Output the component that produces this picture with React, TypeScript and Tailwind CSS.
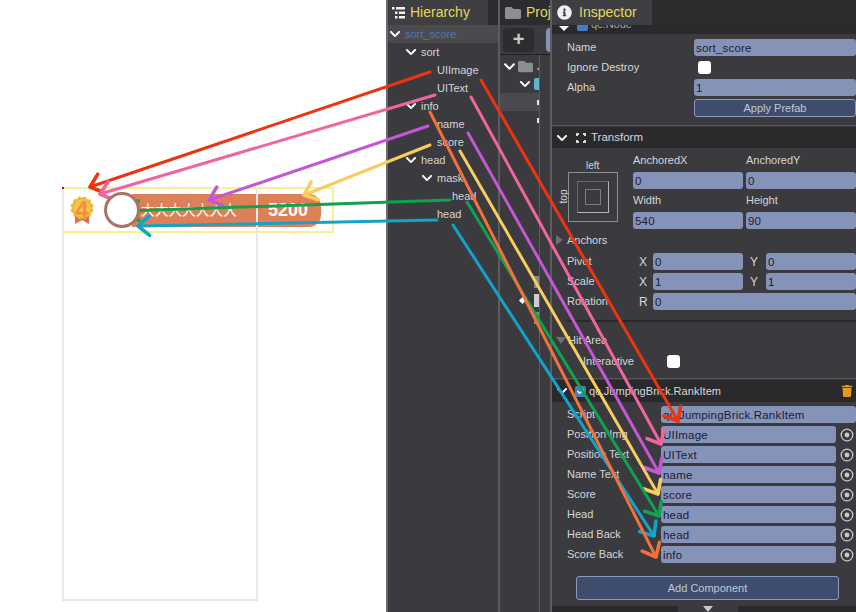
import { FaChevronDown, FaInfoCircle, FaFolder, FaTrash, FaCheck } from 'react-icons/fa'

const inputCls = 'bg-[#8693b8] rounded-[3px] h-[17px] px-[2px] text-[11.5px] leading-[18px] tracking-[0.2px] text-[#1c2030] overflow-hidden whitespace-nowrap'
const labelCls = 'text-[11px] text-[#d6d6d6]'

function Chevron({ size = 12 }: { size?: number }) {
  return <FaChevronDown size={size} className="text-white shrink-0" />
}

function TreeRow({ indent, label, open, active }: { indent: number; label: string; open?: boolean; active?: boolean }) {
  return (
    <div className={`h-[18px] flex items-center text-[11px] text-[#d4d4d4] whitespace-nowrap ${active ? 'bg-[#4b4b4f]' : ''}`} style={{ paddingLeft: indent }}>
      <div className="w-[16px] flex">{open && <Chevron />}</div>
      <span className={active ? 'text-[#4f74b5]' : ''}>{label}</span>
    </div>
  )
}

function Row({ label, value }: { label: string; value: string }) {
  return (
    <div className="flex items-center h-[17px] mt-[3px]">
      <div className={`w-[94px] ${labelCls}`}>{label}</div>
      <div className={`${inputCls} w-[175px]`}>{value}</div>
      <svg width="14" height="14" viewBox="0 0 14 14" className="ml-[4px] shrink-0">
        <circle cx="7" cy="7" r="5.8" fill="none" stroke="#c9c9c9" strokeWidth="1.3" />
        <circle cx="7" cy="7" r="2.4" fill="#c9c9c9" />
      </svg>
    </div>
  )
}

function Xy({ label, a, b, c, d, mt }: { label: string; a: string; b: string; c: string; d: string; mt: string }) {
  return (
    <div className={`flex items-center h-[17px] ${mt}`}>
      <div className={`w-[72px] ${labelCls}`}>{label}</div>
      <div className="w-[14px] text-[12px] text-[#d6d6d6]">{a}</div>
      <div className={`${inputCls} w-[90px]`}>{b}</div>
      <div className="w-[23px] pl-[7px] text-[12px] text-[#d6d6d6]">{c}</div>
      <div className={`${inputCls} w-[90px]`}>{d}</div>
    </div>
  )
}

function Arrows() {
  const lines: [string, number, number, number, number][] = [
    ['#f0330f', 430, 72, 90, 187],
    ['#f0330f', 481, 80, 678, 421],
    ['#f0659f', 435, 95, 100, 194],
    ['#f0659f', 471, 97, 661, 444],
    ['#c657d4', 428, 126, 209, 200],
    ['#c657d4', 468, 133, 659, 473],
    ['#f8cd5e', 430, 145, 304, 195],
    ['#f8cd5e', 460, 151, 658, 494],
    ['#0fa24f', 450, 200, 127, 211],
    ['#0fa24f', 467, 202, 659, 516],
    ['#12a3c9', 437, 220, 138, 226],
    ['#12a3c9', 453, 225, 654, 536],
    ['#f2703a', 430, 112, 656, 557],
  ]
  return (
    <svg width="856" height="612" className="absolute left-0 top-0 pointer-events-none">
      {lines.map(([color, x1, y1, x2, y2], i) => {
        const ang = Math.atan2(y2 - y1, x2 - x1)
        const h = 15
        const ax = x2 - h * Math.cos(ang - 0.7)
        const ay = y2 - h * Math.sin(ang - 0.7)
        const bx = x2 - h * Math.cos(ang + 0.7)
        const by = y2 - h * Math.sin(ang + 0.7)
        return (
          <g key={i} stroke={color} strokeWidth="3" fill="none" strokeLinecap="round" strokeLinejoin="round">
            <line x1={x1} y1={y1} x2={x2} y2={y2} />
            <polyline points={`${ax},${ay} ${x2},${y2} ${bx},${by}`} strokeWidth="3.6" />
          </g>
        )
      })}
    </svg>
  )
}

function Medal() {
  const pts = Array.from({ length: 24 }, (_, i) => {
    const r = i % 2 ? 12 : 10.2
    const a = (i * Math.PI) / 12
    return `${12 + r * Math.cos(a)},${12 + r * Math.sin(a)}`
  }).join(' ')
  return (
    <svg width="24" height="28" viewBox="0 0 24 28" className="shrink-0">
      <path d="M5 16 L5 28 L12 24 L19 28 L19 16 Z" fill="#e2685a" />
      <polygon points={pts} fill="#f4b533" />
      <circle cx="12" cy="12" r="8.5" fill="#f6c350" />
      <text x="12" y="22" textAnchor="middle" fontSize="24" fontWeight="700" fontFamily="Liberation Sans" fill="#e8953c">4</text>
    </svg>
  )
}

export default function App() {
  return (
    <div className="relative flex w-[856px] h-[612px] overflow-hidden bg-white font-['Liberation_Sans',sans-serif]">
      {/* game preview */}
      <div className="w-[386px] shrink-0 pl-[62px] pt-[187px]">
        <div className="relative w-[196px] h-[414px]">
          <div className="w-[272px] h-[46px] border-2 border-[#f6f294] flex items-center pl-[6px]">
            <Medal />
            <div className="ml-[10px] w-[36px] h-[36px] rounded-full bg-white border-[3px] border-[#ab7462] z-10 shrink-0" />
            <div className="-ml-[8px] w-[189px] h-[33px] rounded-r-[12px] bg-[#de8057] flex items-center pl-[9px] text-white">
              <span className="w-[127px] text-[13.7px] font-['Noto_Sans_CJK_SC',sans-serif] leading-none whitespace-nowrap">大大大大大大大</span>
              <span className="text-[18px] font-bold">5200</span>
            </div>
          </div>
          <div className="absolute inset-0 border-2 border-[#e8e8e8] border-t-0" />
          <div className="absolute left-0 top-0 w-[2px] h-[2px] bg-[#a01030]" />
        </div>
      </div>

      {/* hierarchy */}
      <div className="w-[114px] shrink-0 bg-[#3b3b3f] border-l-2 border-[#6a6a6c] border-r-2 border-r-[#5c5c5f]">
        <div className="h-[25px] bg-[#2c2c2f]">
          <div className="w-[100px] h-[25px] bg-[#3f3f43] flex items-center gap-[5px] pl-[4px]">
            <svg width="13" height="13" viewBox="0 0 13 13" fill="#f2f2f2">
              <rect x="0" y="1" width="2.5" height="2.5" />
              <rect x="4" y="1" width="9" height="2.5" />
              <rect x="3" y="5.5" width="2.5" height="2.5" />
              <rect x="7" y="5.5" width="6" height="2.5" />
              <rect x="3" y="10" width="2.5" height="2.5" />
              <rect x="7" y="10" width="6" height="2.5" />
            </svg>
            <span className="text-[14px] text-[#e6d65a]">Hierarchy</span>
          </div>
        </div>
        <TreeRow indent={1} label="sort_score" open active />
        <TreeRow indent={17} label="sort" open />
        <TreeRow indent={33} label="UIImage" />
        <TreeRow indent={33} label="UIText" />
        <TreeRow indent={17} label="info" open />
        <TreeRow indent={33} label="name" />
        <TreeRow indent={33} label="score" />
        <TreeRow indent={17} label="head" open />
        <TreeRow indent={33} label="mask" open />
        <TreeRow indent={48} label="head" />
        <TreeRow indent={33} label="head" />
      </div>

      {/* project */}
      <div className="w-[52px] shrink-0 bg-[#3b3b3f] border-r-2 border-[#5c5c5f]">
        <div className="h-[25px] bg-[#2c2c2f] flex items-center gap-[5px] pl-[5px] overflow-hidden">
          <FaFolder size={16} className="text-[#8b8f92] shrink-0" />
          <span className="text-[14px] text-[#e6d65a]">Proj</span>
        </div>
        <div className="h-[30px] flex items-center pl-[3px] gap-[12px] border-b border-[#222225] overflow-hidden">
          <div className="w-[31px] h-[24px] shrink-0 rounded-[4px] bg-[#2d2d30] text-center text-[20px] leading-[22px] font-bold text-[#c9c9c9]">+</div>
          <div className="w-[8px] h-[24px] shrink-0 rounded-l-[4px] bg-[#8693b8]" />
        </div>
        <div className="w-[40px] h-[557px] border-r border-[#5c5c5f] overflow-hidden">
          <div className="h-[18px] mt-[2px] flex items-center pl-[3px] gap-[2px]">
            <Chevron size={13} />
            <FaFolder size={15} className="text-[#8b8f92] shrink-0" />
            <span className="ml-[2px] text-[11px] text-[#d4d4d4]">J</span>
          </div>
          <div className="h-[18px] flex items-center pl-[19px] gap-[3px]">
            <Chevron />
            <div className="w-[6px] h-[12px] rounded-l-[2px] bg-[#5fb4cf]" />
          </div>
          <div className="h-[18px] bg-[#4b4b4f] pl-[37px] flex items-center">
            <div className="w-[3px] h-[5px] bg-[#e8e8e8]" />
          </div>
          <div className="h-[18px] pl-[37px] flex items-center">
            <div className="w-[3px] h-[5px] bg-[#e8e8e8]" />
          </div>
          <div className="mt-[144px] h-[18px] pl-[34px] flex items-center"><div className="w-[5px] h-[12px] bg-[#7f8a80]" /></div>
          <div className="h-[18px] pl-[20px] flex items-center">
            <div className="w-[5px] h-[5px] bg-white rotate-45" />
            <div className="ml-[9px] w-[5px] h-[13px] bg-[#cfcfcf]" />
          </div>
          <div className="h-[18px] pl-[34px] flex items-center"><div className="w-[5px] h-[12px] bg-[#7f8a80]" /></div>
        </div>
      </div>

      {/* inspector */}
      <div className="flex-1 bg-[#3b3b3f] min-w-0 overflow-hidden">
        <div className="h-[25px] bg-[#2c2c2f]">
          <div className="w-[100px] h-[25px] bg-[#3f3f43] flex items-center gap-[7px] pl-[5px]">
            <FaInfoCircle size={15} className="text-[#f0f0f0]" />
            <span className="text-[14px] text-[#e6d65a]">Inspector</span>
          </div>
        </div>
        <div className="h-[9px] bg-[#2a2a2d] flex items-start pl-[7px] overflow-hidden">
          <div className="w-0 h-0 mt-[1px] border-x-[5px] border-x-transparent border-t-[5px] border-t-white" />
          <div className="ml-[8px] -mt-[4px] w-[11px] h-[10px] rounded-[2px] bg-[#3f7fc8] shrink-0" />
          <span className="ml-[3px] -mt-[7px] text-[11px] leading-[13px] text-[#a8a8a8]">qc.Node</span>
        </div>

        <div className="pl-[15px]">
          <div className="flex items-center h-[17px] mt-[5px]">
            <div className={`w-[127px] ${labelCls}`}>Name</div>
            <div className={`${inputCls} flex-1`}>sort_score</div>
          </div>
          <div className="flex items-center h-[17px] mt-[3px]">
            <div className={`w-[131px] ${labelCls}`}>Ignore Destroy</div>
            <div className="w-[13px] h-[13px] rounded-[3px] bg-white" />
          </div>
          <div className="flex items-center h-[17px] mt-[3px]">
            <div className={`w-[127px] ${labelCls}`}>Alpha</div>
            <div className={`${inputCls} flex-1`}>1</div>
          </div>
          <div className="ml-[127px] mt-[3px] h-[18px] rounded-[3px] bg-[#3e4d6e] border border-[#8e99b5] text-center text-[11px] leading-[16px] text-[#c3c7d2]">Apply Prefab</div>
        </div>

        <div className="mt-[8px] h-[1px] bg-[#58585b]" />
        <div className="mt-[1px] h-[21px] bg-[#2a2a2d] flex items-center pl-[4px] gap-[7px]">
          <Chevron size={12} />
          <svg width="12" height="12" viewBox="0 0 12 12" fill="#d8d8d8">
            <path d="M1 1 L4 1 L4 3 L3 3 L3 4 L1 4 Z" />
            <path d="M8 1 L11 1 L11 4 L9 4 L9 3 L8 3 Z" />
            <path d="M1 8 L3 8 L3 9 L4 9 L4 11 L1 11 Z" />
            <path d="M9 8 L11 8 L11 11 L8 11 L8 9 L9 9 Z" />
          </svg>
          <span className="-ml-[3px] text-[11.5px] text-[#d6d6d6]">Transform</span>
        </div>

        <div className="flex pl-[16px]">
          <div className="w-[65px] shrink-0 relative pt-[12px]">
            <div className="absolute left-[3px] top-[41px] text-[10px] text-[#d6d6d6] -rotate-90 origin-center -translate-x-[14px]">top</div>
            <div className="pl-[18px] text-[10px] leading-[12px] text-[#d6d6d6]">left</div>
            <div className="w-[50px] h-[50px] border border-[#8c8c8c] flex items-center justify-center">
              <div className="w-[32px] h-[32px] border-t border-l border-r border-b border-t-[#b04a42] border-l-[#b04a42] border-r-[#b5b5b5] border-b-[#b5b5b5] flex items-center justify-center">
                <div className="w-[16px] h-[16px] border border-[#7c7c7c]" />
              </div>
            </div>
          </div>
          <div className="flex-1">
            <div className={`flex gap-[3px] mt-[6px] leading-[13px] ${labelCls}`}>
              <div className="w-[110px]">AnchoredX</div>
              <div className="w-[110px]">AnchoredY</div>
            </div>
            <div className="flex gap-[3px] mt-[5px]">
              <div className={`${inputCls} w-[110px]`}>0</div>
              <div className={`${inputCls} w-[110px]`}>0</div>
            </div>
            <div className={`flex gap-[3px] mt-[5px] leading-[13px] ${labelCls}`}>
              <div className="w-[110px]">Width</div>
              <div className="w-[110px]">Height</div>
            </div>
            <div className="flex gap-[3px] mt-[5px]">
              <div className={`${inputCls} w-[110px]`}>540</div>
              <div className={`${inputCls} w-[110px]`}>90</div>
            </div>
          </div>
        </div>

        <div className={`flex items-center h-[14px] mt-[4px] pl-[4px] gap-[4px] ${labelCls}`}>
          <div className="w-0 h-0 border-y-[5px] border-y-transparent border-l-[7px] border-l-[#6f6f72]" />
          <span>Anchors</span>
        </div>

        <div className="pl-[15px]">
          <Xy label="Pivot" a="X" b="0" c="Y" d="0" mt="mt-[6px]" />
          <Xy label="Scale" a="X" b="1" c="Y" d="1" mt="mt-[3px]" />
          <div className="flex items-center h-[17px] mt-[3px]">
            <div className={`w-[72px] ${labelCls}`}>Rotation</div>
            <div className="w-[14px] text-[12px] text-[#d6d6d6]">R</div>
            <div className={`${inputCls} flex-1`}>0</div>
          </div>
          <div className="mt-[10px] h-[2px] bg-[#29292c]" />
        </div>

        <div className={`flex items-center h-[14px] mt-[11px] pl-[4px] gap-[2px] ${labelCls}`}>
          <div className="w-0 h-0 border-x-[5px] border-x-transparent border-t-[7px] border-t-[#6f6f72]" />
          <span>Hit Area</span>
        </div>
        <div className={`flex items-center h-[13px] mt-[8px] pl-[31px] ${labelCls}`}>
          <span className="w-[84px]">Interactive</span>
          <div className="w-[13px] h-[13px] rounded-[3px] bg-white" />
        </div>

        <div className="mt-[10px] h-[1px] bg-[#58585b]" />
        <div className="mt-[1px] h-[22px] bg-[#2a2a2d] flex items-center pl-[4px] pr-[3px]">
          <Chevron size={12} />
          <div className="ml-[7px] w-[11px] h-[11px] rounded-[2px] bg-[#3f7fc8] flex items-center justify-center">
            <FaCheck size={7} className="text-white" />
          </div>
          <span className="ml-[3px] text-[11px] tracking-[0.05px] text-[#d6d6d6] flex-1">qc.JumpingBrick.RankItem</span>
          <FaTrash size={12} className="text-[#e09a1f]" />
        </div>

        <div className="pl-[15px]">
          <div className="flex items-center h-[17px] mt-[4px]">
            <div className={`w-[94px] ${labelCls}`}>Script</div>
            <div className={`${inputCls} flex-1`}>qc.JumpingBrick.RankItem</div>
          </div>
          <Row label="Position Img" value="UIImage" />
          <Row label="Position Text" value="UIText" />
          <Row label="Name Text" value="name" />
          <Row label="Score" value="score" />
          <Row label="Head" value="head" />
          <Row label="Head Back" value="head" />
          <Row label="Score Back" value="info" />
          <div className="ml-[9px] mt-[13px] w-[263px] h-[24px] rounded-[3px] bg-[#3e4d6e] border border-[#8e99b5] text-center text-[11px] leading-[22px] text-[#c3c7d2]">Add Component</div>
        </div>

        <div className="mt-[6px] h-[6px] bg-[#2a2a2d] flex justify-center pl-[8px]">
          <div className="w-[60px] h-[6px] bg-[#3b3b3f] flex justify-center">
            <div className="w-0 h-0 border-x-[5px] border-x-transparent border-t-[6px] border-t-[#c9c9c9]" />
          </div>
        </div>
      </div>

      <Arrows />
    </div>
  )
}
